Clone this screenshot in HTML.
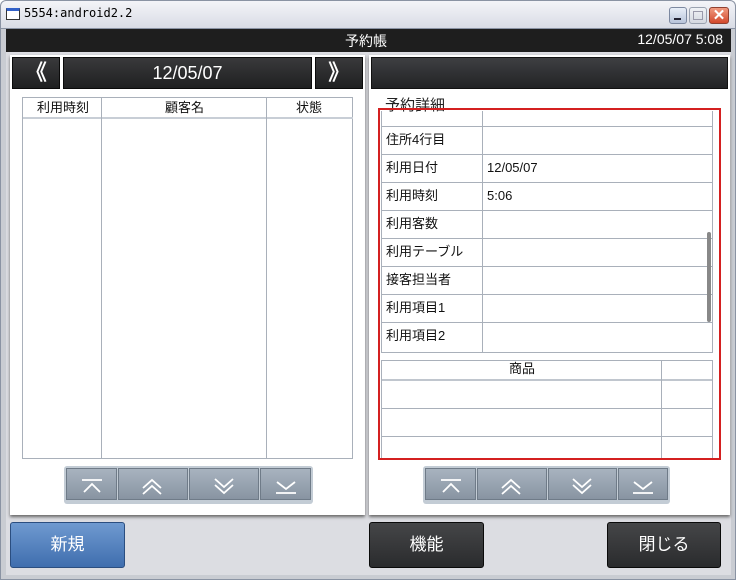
<!DOCTYPE html>
<html><head><meta charset="utf-8"><style>
*{margin:0;padding:0;box-sizing:border-box}
body{width:740px;height:582px;overflow:hidden;background:#fff;font-family:"Liberation Sans","Noto Sans CJK JP",sans-serif;position:relative}
.a{position:absolute}
.tb{left:0;top:0;width:736px;height:29px;background:linear-gradient(#f4f4f8,#d8dbe4);border:1px solid #8a93a3;border-bottom:none;border-radius:6px 6px 0 0}
.frame{left:0;top:28px;width:736px;height:552px;background:#c9ccd2;border:1px solid #8a93a3}
.status{left:6px;top:29px;width:725px;height:23px;background:#1e1e1e;color:#fff;font-size:14px}
.body{left:6px;top:52px;width:725px;height:523px;background:#dcdde2}
.panel{background:#fff;box-shadow:0 2px 3px #666}
.hdr{background:linear-gradient(#3e3f42,#222325);border:1px solid #111}
.btn{background:linear-gradient(#39393b,#1f2021);border:1px solid #0a0a0a;color:#fff;text-align:center}
.nav{background:#c3ccd5;border-radius:3px}
.nb{background:linear-gradient(#a8b3bf,#8894a2);border:1px solid #6f7b88;position:absolute;top:2px;height:32px}
.ln{background:#a9b0ba}
.t{font-size:13px;color:#111;line-height:16px}
</style></head><body>
<div class="a tb"></div>
<div class="a" style="left:6px;top:8px;width:14px;height:12px;border:1px solid #333;border-top:3px solid #3260c8;background:#fff"></div>
<div class="a" style="left:24px;top:6px;font-size:12px;font-family:'DejaVu Sans Mono',monospace;color:#000">5554:android2.2</div>
<div class="a" style="left:669px;top:7px;width:18px;height:17px;background:linear-gradient(#e8eef8,#b8c4da);border:1px solid #7c88a0;border-radius:3px"></div>
<div class="a" style="left:674px;top:18px;width:7px;height:2px;background:#223"></div>
<div class="a" style="left:689px;top:7px;width:18px;height:17px;background:linear-gradient(#f0f2f6,#d4d8e0);border:1px solid #9aa2b0;border-radius:3px"></div>
<div class="a" style="left:693px;top:11px;width:10px;height:9px;border:1px solid #99a"></div>
<div class="a" style="left:709px;top:7px;width:20px;height:17px;background:linear-gradient(#f09a80,#d2482c);border:1px solid #904030;border-radius:3px;color:#fff;font-size:15px;text-align:center;line-height:16px;font-weight:bold">✕</div>
<div class="a frame"></div>
<div class="a status"><span class="a" style="left:339px;top:2px">予約帳</span><span class="a" style="right:8px;top:2px">12/05/07 5:08</span></div>
<div class="a body"></div>

<!-- left panel -->
<div class="a panel" style="left:10px;top:55px;width:355px;height:460px"></div>
<div class="a hdr btn" style="left:12px;top:57px;width:48px;height:32px;font-size:22px;line-height:30px;font-weight:bold">《</div>
<div class="a hdr btn" style="left:63px;top:57px;width:249px;height:32px;font-size:18px;line-height:31px">12/05/07</div>
<div class="a hdr btn" style="left:315px;top:57px;width:48px;height:32px;font-size:22px;line-height:30px;font-weight:bold">》</div>
<div class="a" style="left:22px;top:97px;width:331px;height:362px;border:1px solid #a9b0ba"></div>
<div class="a ln" style="left:23px;top:117px;width:330px;height:2px;background:#c8ced6"></div>
<div class="a ln" style="left:101px;top:98px;width:1px;height:360px"></div>
<div class="a ln" style="left:266px;top:98px;width:1px;height:360px"></div>
<div class="a t" style="left:37px;top:100px">利用時刻</div>
<div class="a t" style="left:165px;top:100px">顧客名</div>
<div class="a t" style="left:296px;top:100px">状態</div>
<div class="a nav" style="left:64px;top:466px;width:249px;height:38px">
<div class="nb" style="left:2px;width:51px"></div><div class="nb" style="left:54px;width:70px"></div><div class="nb" style="left:125px;width:70px"></div><div class="nb" style="left:196px;width:51px"></div></div>
<svg class="a" style="left:64px;top:466px" width="249" height="38" fill="none" stroke="#fff" stroke-width="1.8">
<path d="M18 14h20M20 26l8-8 8 8"/><path d="M79 22l9-8 9 8M79 28l9-8 9 8"/><path d="M151 13l9 8 9-8M151 19l9 8 9-8"/><path d="M213 16l9 7 9-7M212 27h20"/></svg>

<!-- right panel -->
<div class="a panel" style="left:369px;top:55px;width:361px;height:460px"></div>
<div class="a hdr" style="left:371px;top:57px;width:357px;height:32px"></div>
<div class="a" style="left:385px;top:94px;font-size:15px;color:#222">予約詳細</div>
<div class="a" style="left:381px;top:111px;width:332px;height:242px;border:1px solid #a9b0ba;border-top:none"></div>
<div class="a ln" style="left:482px;top:111px;width:1px;height:242px"></div>
<div class="a ln" style="left:382px;top:126px;width:330px;height:1px"></div>
<div class="a ln" style="left:382px;top:154px;width:330px;height:1px"></div>
<div class="a ln" style="left:382px;top:182px;width:330px;height:1px"></div>
<div class="a ln" style="left:382px;top:210px;width:330px;height:1px"></div>
<div class="a ln" style="left:382px;top:238px;width:330px;height:1px"></div>
<div class="a ln" style="left:382px;top:266px;width:330px;height:1px"></div>
<div class="a ln" style="left:382px;top:294px;width:330px;height:1px"></div>
<div class="a ln" style="left:382px;top:322px;width:330px;height:1px"></div>
<div class="a" style="left:707px;top:232px;width:4px;height:90px;background:#888;border-radius:2px"></div>
<div class="a t" style="left:386px;top:132px">住所4行目</div>
<div class="a t" style="left:386px;top:160px">利用日付</div><div class="a t" style="left:487px;top:160px">12/05/07</div>
<div class="a t" style="left:386px;top:188px">利用時刻</div><div class="a t" style="left:487px;top:188px">5:06</div>
<div class="a t" style="left:386px;top:216px">利用客数</div>
<div class="a t" style="left:386px;top:244px">利用テーブル</div>
<div class="a t" style="left:386px;top:272px">接客担当者</div>
<div class="a t" style="left:386px;top:300px">利用項目1</div>
<div class="a t" style="left:386px;top:328px">利用項目2</div>
<div class="a" style="left:381px;top:360px;width:332px;height:100px;border:1px solid #a9b0ba;border-bottom:none"></div>
<div class="a ln" style="left:382px;top:379px;width:330px;height:2px;background:#c0c6ce"></div>
<div class="a ln" style="left:382px;top:408px;width:330px;height:1px"></div>
<div class="a ln" style="left:382px;top:436px;width:330px;height:1px"></div>
<div class="a ln" style="left:661px;top:361px;width:1px;height:99px"></div>
<div class="a t" style="left:509px;top:361px">商品</div>
<div class="a" style="left:378px;top:108px;width:343px;height:352px;border:2px solid #d42020"></div>
<div class="a nav" style="left:423px;top:466px;width:247px;height:38px">
<div class="nb" style="left:2px;width:51px"></div><div class="nb" style="left:54px;width:70px"></div><div class="nb" style="left:125px;width:69px"></div><div class="nb" style="left:195px;width:50px"></div></div>
<svg class="a" style="left:423px;top:466px" width="247" height="38" fill="none" stroke="#fff" stroke-width="1.8">
<path d="M18 14h20M20 26l8-8 8 8"/><path d="M79 22l9-8 9 8M79 28l9-8 9 8"/><path d="M150 13l9 8 9-8M150 19l9 8 9-8"/><path d="M211 16l9 7 9-7M210 27h20"/></svg>

<!-- bottom buttons -->
<div class="a" style="left:10px;top:522px;width:115px;height:46px;background:linear-gradient(#6f9ad0,#3f6eae);border:1px solid #2b4e80;border-radius:3px;color:#fff;font-size:17px;text-align:center;line-height:44px">新規</div>
<div class="a btn" style="left:369px;top:522px;width:115px;height:46px;border-radius:3px;font-size:17px;line-height:44px;background:linear-gradient(#454648,#2a2b2d)">機能</div>
<div class="a btn" style="left:607px;top:522px;width:114px;height:46px;border-radius:3px;font-size:17px;line-height:44px;background:linear-gradient(#454648,#2a2b2d)">閉じる</div>
</body></html>
